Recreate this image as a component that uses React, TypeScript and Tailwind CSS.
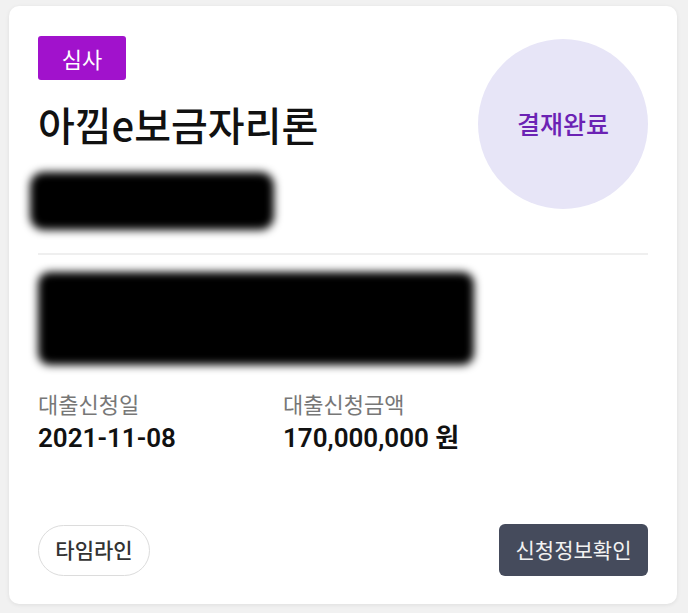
import React from 'react';

const krFont = { fontFamily: '"Noto Sans CJK KR", "Noto Sans", sans-serif' };
const numFont = { fontFamily: 'Roboto, "Noto Sans CJK KR", sans-serif' };

// blurred marker used to hide personal info
const Redacted = ({ className }: { className: string }) => (
  <div className={`bg-black blur-[4px] ${className}`} />
);

const App = () => {
  return (
    <div className="min-h-[613px] w-[688px] bg-[#f1f1f1] pl-[9px] pt-[6px]" style={krFont}>
      <div className="flex h-[598px] w-[668px] flex-col rounded-[10px] bg-white px-[29px] pb-[28px] pt-[30px] shadow-[0_1px_4px_rgba(0,0,0,0.08)]">
        {/* Top: badge, title, account + status circle */}
        <div className="flex justify-between">
          <div className="flex flex-col items-start">
            <span className="flex h-[44px] w-[88px] items-center justify-center rounded-[3px] bg-[#a112cc] text-[22px] text-white">
              심사
            </span>
            <h1 className="mt-[21px] text-[40px] font-medium leading-[46px] text-[#111]">아낌e보금자리론</h1>
            <Redacted className="-ml-[8px] mt-[25px] h-[58px] w-[244px] rounded-[14px]" />
          </div>
          <div className="mt-[3px] flex h-[170px] w-[170px] items-center justify-center rounded-full bg-[#e7e5f7]">
            <span className="text-[25px] font-medium text-[#6b22b4]">결재완료</span>
          </div>
        </div>

        <div className="mt-[23px] h-[2px] bg-[#efefef]" />

        <Redacted className="mt-[17px] h-[93px] w-[436px] rounded-[12px]" />

        {/* Loan info */}
        <div className="mt-[24px] flex">
          <div className="w-[245px]">
            <div className="text-[22px] leading-[28px] text-[#777]">대출신청일</div>
            <div className="mt-[5px] text-[26px] font-semibold leading-[32px] text-[#111]" style={numFont}>
              2021-11-08
            </div>
          </div>
          <div>
            <div className="text-[22px] leading-[28px] text-[#777]">대출신청금액</div>
            <div className="mt-[5px] text-[26px] font-semibold leading-[32px] text-[#111]" style={numFont}>
              170,000,000 원
            </div>
          </div>
        </div>

        {/* Actions */}
        <div className="mt-auto flex items-center justify-between">
          <button className="flex h-[51px] w-[112px] items-center justify-center rounded-full border border-[#dcdcdc] text-[21px] font-medium text-[#333]">
            타임라인
          </button>
          <button className="flex h-[52px] w-[149px] items-center justify-center rounded-[6px] bg-[#454b5c] text-[21px] text-[#f2f2f2]">
            신청정보확인
          </button>
        </div>
      </div>
    </div>
  );
};

export default App;
